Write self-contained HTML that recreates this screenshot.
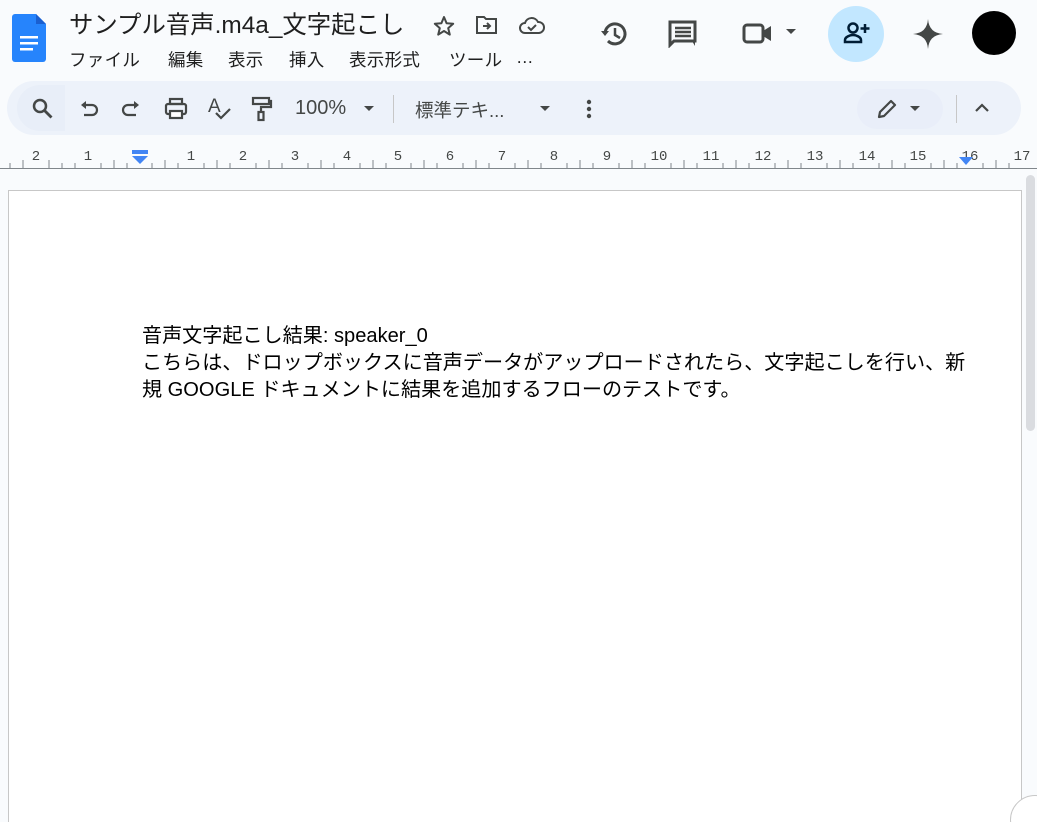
<!DOCTYPE html>
<html><head><meta charset="utf-8"><style>
*{margin:0;padding:0;box-sizing:border-box}
html,body{width:1037px;height:822px;overflow:hidden}
body{background:#f9fbfd;font-family:"Liberation Sans","Noto Sans CJK JP",sans-serif;position:relative;color:#1f1f1f}
.abs{position:absolute}
.title{left:69px;top:6px;font-size:24.4px;color:#1f1f1f;white-space:nowrap}
.menu{top:47px;font-size:17.5px;color:#1f1f1f;letter-spacing:0.3px}
.tb{left:7px;top:81px;width:1014px;height:54px;background:#edf2fa;border-radius:27px}
.tbt{font-size:18px;color:#444746;white-space:nowrap}
.page{left:8px;top:190px;width:1014px;height:640px;background:#fff;border:1px solid #c7c7c7}
.txt{left:142px;font-size:20.1px;color:#000;white-space:nowrap;line-height:27px}
</style></head><body>
<svg class="abs" style="left:12px;top:14px" width="34" height="48" viewBox="0 0 34 48"><path d="M3 0h21l10 10v35a3 3 0 0 1-3 3H3a3 3 0 0 1-3-3V3a3 3 0 0 1 3-3z" fill="#2684fc"/><path d="M24 0l10 10H24z" fill="#1a5fd0"/><rect x="8" y="22" width="18" height="2.5" fill="#fff"/><rect x="8" y="28" width="18" height="2.5" fill="#fff"/><rect x="8" y="34" width="13" height="2.5" fill="#fff"/></svg>
<div class="abs title">サンプル音声.m4a_文字起こし</div>
<svg class="abs" style="left:432px;top:14px" width="24" height="24" viewBox="0 0 24 24"><path d="M12 3l2.6 6.3 6.6.5-5 4.3 1.6 6.5L12 17l-5.8 3.6 1.6-6.5-5-4.3 6.6-.5z" fill="none" stroke="#444746" stroke-width="2" stroke-linejoin="round"/></svg>
<svg class="abs" style="left:475px;top:14px" width="24" height="22" viewBox="0 0 24 22"><path d="M2 3h7l2 2h10v14H2z" fill="none" stroke="#444746" stroke-width="2"/><path d="M8 12h7M12 9l3 3-3 3" fill="none" stroke="#444746" stroke-width="2"/></svg>
<svg class="abs" style="left:518px;top:14px" width="28" height="22" viewBox="0 0 28 22"><path d="M7 19a5 5 0 0 1 0-10 7 7 0 0 1 13-1 5.5 5.5 0 0 1 1 11z" fill="none" stroke="#444746" stroke-width="2"/><path d="M10 13l3 3 5-5" fill="none" stroke="#444746" stroke-width="2"/></svg>
<div class="abs menu" style="left:69px">ファイル</div>
<div class="abs menu" style="left:168px">編集</div>
<div class="abs menu" style="left:228px">表示</div>
<div class="abs menu" style="left:289px">挿入</div>
<div class="abs menu" style="left:349px">表示形式</div>
<div class="abs menu" style="left:449px">ツール</div>
<div class="abs menu" style="left:516px">…</div>
<svg class="abs" style="left:600px;top:19px" width="30" height="30" viewBox="0 0 30 30"><path d="M5 15a10 10 0 1 1 3 7" fill="none" stroke="#444746" stroke-width="3"/><path d="M1 12l4 5 4-5z" fill="#444746"/><path d="M15 9v7l5 3" fill="none" stroke="#444746" stroke-width="2.5"/></svg>
<svg class="abs" style="left:668px;top:20px" width="30" height="28" viewBox="0 0 30 28"><path d="M2 2h25v19H6l-4 4z" fill="none" stroke="#444746" stroke-width="3"/><path d="M7 8h16M7 12h16M7 16h16" stroke="#444746" stroke-width="2.5"/><path d="M24 21h3v5z" fill="#444746"/></svg>
<svg class="abs" style="left:742px;top:21px" width="32" height="24" viewBox="0 0 32 24"><rect x="2" y="4" width="19" height="17" rx="3" fill="none" stroke="#444746" stroke-width="3"/><path d="M21 10l8-5v15l-8-5z" fill="#444746"/></svg>
<svg class="abs" style="left:786px;top:29px" width="12" height="7"><path d="M0 0h10L5 5z" fill="#444746"/></svg>
<div class="abs" style="left:828px;top:6px;width:56px;height:56px;border-radius:50%;background:#c2e7ff"></div>
<svg class="abs" style="left:843px;top:21px" width="28" height="24" viewBox="0 0 28 24"><circle cx="10" cy="7" r="4.5" fill="none" stroke="#001d35" stroke-width="2.5"/><path d="M2 21v-2c0-3 5-5 8-5s8 2 8 5v2z" fill="none" stroke="#001d35" stroke-width="2.5"/><path d="M22 3v9M17.5 7.5h9" stroke="#001d35" stroke-width="2.5"/></svg>
<svg class="abs" style="left:912px;top:18px" width="32" height="32" viewBox="0 0 32 32"><path d="M16 1Q17 15 31 16Q17 17 16 31Q15 17 1 16Q15 15 16 1z" fill="#444746"/></svg>
<div class="abs" style="left:972px;top:11px;width:44px;height:44px;border-radius:50%;background:#000"></div>
<div class="abs tb"></div>
<div class="abs" style="left:17px;top:85px;width:48px;height:46px;background:#e8eef8;border-radius:23px 0 0 23px"></div>
<svg class="abs" style="left:32px;top:98px" width="22" height="22" viewBox="0 0 22 22"><circle cx="8" cy="8" r="6" fill="none" stroke="#444746" stroke-width="2.5"/><path d="M12.5 12.5l7 7" stroke="#444746" stroke-width="2.8"/></svg>
<svg class="abs" style="left:78px;top:98px" width="22" height="22" viewBox="0 0 22 22"><path d="M6 7h8a5 5 0 0 1 0 10H6" fill="none" stroke="#444746" stroke-width="2.2"/><path d="M3 7l5-4v8z" fill="#444746"/></svg>
<svg class="abs" style="left:120px;top:98px" width="22" height="22" viewBox="0 0 22 22"><path d="M16 7H8a5 5 0 0 0 0 10h8" fill="none" stroke="#444746" stroke-width="2.2"/><path d="M19 7l-5-4v8z" fill="#444746"/></svg>
<svg class="abs" style="left:164px;top:97px" width="24" height="24" viewBox="0 0 24 24"><rect x="6" y="2" width="12" height="5" fill="none" stroke="#444746" stroke-width="2.2"/><rect x="2" y="7" width="20" height="10" rx="2" fill="none" stroke="#444746" stroke-width="2.2"/><rect x="6" y="14" width="12" height="7" fill="#fff" stroke="#444746" stroke-width="2.2"/></svg>
<div class="abs tbt" style="left:208px;top:96px;font-size:19px">A</div>
<svg class="abs" style="left:214px;top:108px" width="18" height="14"><path d="M2 5l5 5 9-9" fill="none" stroke="#444746" stroke-width="2.2"/></svg>
<svg class="abs" style="left:250px;top:96px" width="24" height="26" viewBox="0 0 24 26"><rect x="3" y="2" width="16" height="6" fill="none" stroke="#444746" stroke-width="2.2"/><path d="M19 5h2v6H11v5" fill="none" stroke="#444746" stroke-width="2.2"/><rect x="8.5" y="16" width="5" height="8" fill="none" stroke="#444746" stroke-width="2.2"/></svg>
<div class="abs tbt" style="left:295px;top:97px;font-size:20px">100%</div>
<svg class="abs" style="left:364px;top:106px" width="12" height="7"><path d="M0 0h10L5 5z" fill="#444746"/></svg>
<div class="abs" style="left:393px;top:95px;width:1px;height:28px;background:#c7c7c7"></div>
<div class="abs tbt" style="left:415px;top:97px;font-size:18.5px">標準テキ...</div>
<svg class="abs" style="left:540px;top:106px" width="12" height="7"><path d="M0 0h10L5 5z" fill="#444746"/></svg>
<svg class="abs" style="left:586px;top:99px" width="6" height="20"><circle cx="3" cy="3" r="2.2" fill="#444746"/><circle cx="3" cy="10" r="2.2" fill="#444746"/><circle cx="3" cy="17" r="2.2" fill="#444746"/></svg>
<div class="abs" style="left:857px;top:89px;width:86px;height:40px;border-radius:20px;background:#e9eef9"></div>
<svg class="abs" style="left:876px;top:98px" width="22" height="22" viewBox="0 0 22 22"><path d="M3 19l1-5L15 3l4 4L8 18z" fill="none" stroke="#444746" stroke-width="2.2" stroke-linejoin="round"/></svg>
<svg class="abs" style="left:910px;top:106px" width="12" height="7"><path d="M0 0h10L5 5z" fill="#444746"/></svg>
<div class="abs" style="left:956px;top:95px;width:1px;height:28px;background:#c7c7c7"></div>
<svg class="abs" style="left:974px;top:103px" width="16" height="10"><path d="M2 8l6-6 6 6" fill="none" stroke="#444746" stroke-width="2.2"/></svg>
<svg class="abs" style="left:0;top:140px" width="1037" height="32" viewBox="0 0 1037 32">
<line x1="0" y1="28.5" x2="1037" y2="28.5" stroke="#80868b"/>
<g font-family="Liberation Mono,monospace" font-size="14" fill="#444746" text-anchor="middle">
<text x="36" y="20">2</text><text x="88" y="20">1</text>
<text x="191" y="20">1</text><text x="243" y="20">2</text><text x="295" y="20">3</text><text x="347" y="20">4</text><text x="398" y="20">5</text><text x="450" y="20">6</text><text x="502" y="20">7</text><text x="554" y="20">8</text><text x="607" y="20">9</text><text x="659" y="20">10</text><text x="711" y="20">11</text><text x="763" y="20">12</text><text x="815" y="20">13</text><text x="867" y="20">14</text><text x="918" y="20">15</text><text x="970" y="20">16</text><text x="1022" y="20">17</text>
</g>
<path stroke="#80868b" fill="none" d="M10 28v-5M23 28v-8M49 28v-8M62 28v-5M75 28v-5M101 28v-5M114 28v-8M127 28v-5M152 28v-5M165 28v-8M178 28v-5M204 28v-5M217 28v-8M230 28v-5M256 28v-5M269 28v-8M282 28v-5M308 28v-5M321 28v-8M334 28v-5M360 28v-5M373 28v-8M386 28v-5M411 28v-5M424 28v-8M437 28v-5M463 28v-5M476 28v-8M489 28v-5M515 28v-5M528 28v-8M541 28v-5M567 28v-5M580 28v-8M593 28v-5M619 28v-5M632 28v-8M645 28v-5M671 28v-5M684 28v-8M697 28v-5M723 28v-5M736 28v-8M749 28v-5M775 28v-5M788 28v-8M801 28v-5M827 28v-5M840 28v-8M853 28v-5M879 28v-5M892 28v-8M905 28v-5M931 28v-5M944 28v-8M957 28v-5M983 28v-5M996 28v-8M1009 28v-5"/>
<rect x="132" y="10" width="16" height="4" fill="#4285f4"/><path d="M132 16h16l-8 8z" fill="#4285f4"/>
<path d="M959 17h14l-7 8z" fill="#4285f4"/>
</svg>
<div class="abs page"></div>
<div class="abs txt" style="top:323px">音声文字起こし結果: speaker_0</div>
<div class="abs txt" style="top:350px">こちらは、ドロップボックスに音声データがアップロードされたら、文字起こしを行い、新</div>
<div class="abs txt" style="top:377px">規 GOOGLE ドキュメントに結果を追加するフローのテストです。</div>
<div class="abs" style="left:1026px;top:175px;width:9px;height:256px;border-radius:5px;background:#dadce0"></div>
<div class="abs" style="left:1010px;top:795px;width:50px;height:50px;border-radius:50%;background:#fff;border:1px solid #c7c7c7"></div>
</body></html>
